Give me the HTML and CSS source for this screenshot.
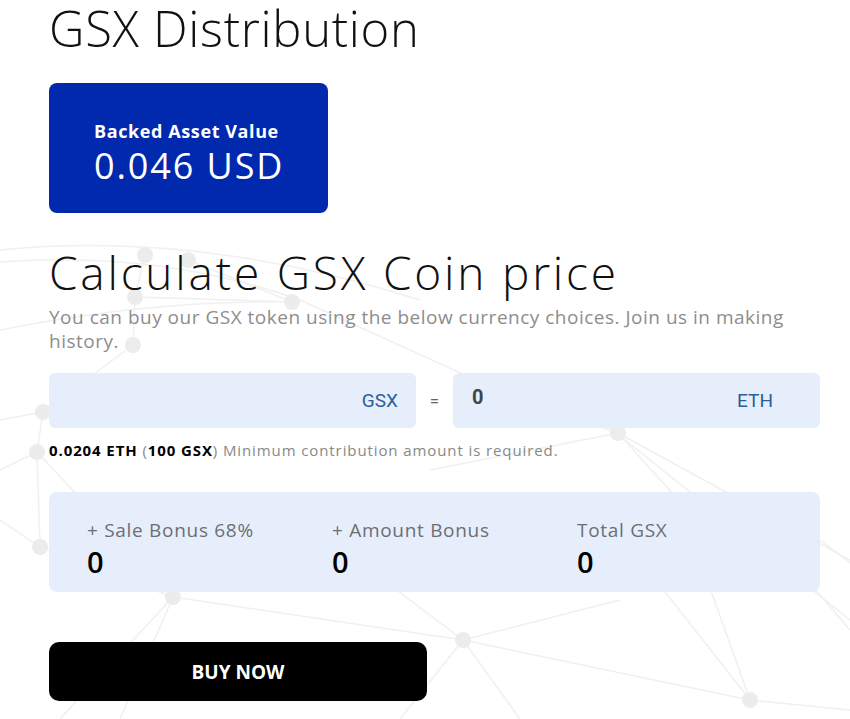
FILE: index.html
```html
<!DOCTYPE html>
<html lang="en">
<head>
<meta charset="utf-8">
<title>GSX Distribution</title>
<link rel="stylesheet" href="styles.css">
</head>
<body>
<svg class="bg-net" width="850" height="719" viewBox="0 0 850 719" aria-hidden="true">
  <g class="net-lines">
    <path d="M0 250 Q 200 230 420 300"/>
    <path d="M0 262 Q 160 250 300 300"/>
    <path d="M0 330 Q 150 300 290 302"/>
    <path d="M145 255 L135 297 L133 345"/>
    <path d="M188 260 L292 302"/>
    <path d="M135 297 L292 302"/>
    <path d="M0 420 L43 412 L133 345"/>
    <path d="M43 412 L37 452 L40 547"/>
    <path d="M0 470 L37 452 L173 597"/>
    <path d="M40 547 L173 597"/>
    <path d="M0 520 L40 547"/>
    <path d="M173 597 L463 640 L750 700"/>
    <path d="M173 597 L60 719"/>
    <path d="M120 719 L173 597"/>
    <path d="M463 640 L400 719"/>
    <path d="M463 640 L520 719"/>
    <path d="M463 640 L330 540"/>
    <path d="M618 433 L850 560"/>
    <path d="M600 420 L850 620"/>
    <path d="M520 400 L618 433"/>
    <path d="M618 433 L760 590"/>
    <path d="M750 700 L700 560"/>
    <path d="M750 700 L850 710"/>
    <path d="M750 700 L640 560"/>
    <path d="M790 560 L850 630"/>
    <path d="M430 470 L618 433"/>
    <path d="M300 300 L520 400"/>
    <path d="M620 600 L463 640"/>
    <path d="M900 600 L820 540"/>
  </g>
  <g class="net-nodes">
    <circle cx="145" cy="255" r="8"/>
    <circle cx="188" cy="260" r="8"/>
    <circle cx="135" cy="297" r="8"/>
    <circle cx="292" cy="302" r="8"/>
    <circle cx="133" cy="345" r="8"/>
    <circle cx="43" cy="412" r="8"/>
    <circle cx="37" cy="452" r="8"/>
    <circle cx="618" cy="433" r="8"/>
    <circle cx="40" cy="547" r="8"/>
    <circle cx="173" cy="597" r="8"/>
    <circle cx="463" cy="640" r="8"/>
    <circle cx="750" cy="700" r="8"/>
  </g>
</svg>

<main class="page">
  <h1 class="title">GSX Distribution</h1>

  <section class="value-card">
    <div class="value-label">Backed Asset Value</div>
    <div class="value-amount">0.046 USD</div>
  </section>

  <h2 class="calc-title">Calculate GSX Coin price</h2>
  <p class="calc-desc">You can buy our GSX token using the below currency choices. Join us in making history.</p>

  <div class="converter">
    <div class="field">
      <span class="field-value"></span>
      <span class="field-unit">GSX</span>
    </div>
    <div class="equals">=</div>
    <div class="field">
      <span class="field-value">0</span>
      <span class="field-unit">ETH</span>
    </div>
  </div>

  <div class="min-note"><b>0.0204 ETH</b> (<b>100 GSX</b>) Minimum contribution amount is required.</div>

  <div class="bonus-box">
    <div class="bonus-item">
      <div class="bonus-label">+ Sale Bonus 68%</div>
      <div class="bonus-value">0</div>
    </div>
    <div class="bonus-item">
      <div class="bonus-label">+ Amount Bonus</div>
      <div class="bonus-value">0</div>
    </div>
    <div class="bonus-item">
      <div class="bonus-label">Total GSX</div>
      <div class="bonus-value">0</div>
    </div>
  </div>

  <button class="buy-btn" type="button">BUY NOW</button>
</main>
</body>
</html>
```

FILE: styles.css
```css
html, body {
  margin: 0;
  padding: 0;
  background: #ffffff;
}

body {
  font-family: "Open Sans", "Lato", sans-serif;
  color: #000;
  position: relative;
  width: 850px;
  height: 719px;
  overflow: hidden;
}

.bg-net {
  position: absolute;
  left: 0;
  top: 0;
  z-index: 0;
}

.net-lines path {
  fill: none;
  stroke: #f0f0f0;
  stroke-width: 1.5;
}

.net-nodes circle {
  fill: #ececec;
}

.page {
  position: relative;
  z-index: 1;
  padding: 0 0 0 49px;
  display: flex;
  flex-direction: column;
  align-items: flex-start;
}

.title {
  margin: 0;
  font-size: 49px;
  font-weight: 300;
  line-height: 56px;
  letter-spacing: 0.7px;
  color: #111;
}

.value-card {
  margin-top: 27px;
  width: 279px;
  height: 130px;
  box-sizing: border-box;
  background: #0029ae;
  border-radius: 8px;
  padding: 38px 0 0 45px;
  color: #fff;
}

.value-label {
  font-size: 18px;
  font-weight: 700;
  line-height: 20px;
  letter-spacing: 0.6px;
}

.value-amount {
  font-size: 36px;
  font-weight: 400;
  line-height: 40px;
  letter-spacing: 1.9px;
  margin-top: 5px;
}

.calc-title {
  margin: 33px 0 0 0;
  font-size: 46px;
  font-weight: 300;
  line-height: 52px;
  letter-spacing: 2.8px;
  color: #111;
}

.calc-desc {
  margin: 7px 0 0 0;
  width: 780px;
  font-size: 19px;
  line-height: 24px;
  letter-spacing: 0.5px;
  color: #8d8d8d;
}

.converter {
  margin-top: 20px;
  display: flex;
  align-items: center;
}

.field {
  width: 367px;
  height: 55px;
  box-sizing: border-box;
  background: #e6eefb;
  border-radius: 6px;
  display: flex;
  align-items: center;
  justify-content: space-between;
  padding: 0 18px 0 19px;
  font-family: "Roboto", "Liberation Sans", sans-serif;
}

.field-value {
  font-size: 20px;
  font-weight: 700;
  color: #444;
  align-self: flex-start;
  margin-top: 12px;
}

.field-unit {
  font-size: 19px;
  color: #2a5f9c;
  margin-right: 29px;
}

.field:first-child .field-unit {
  margin-right: 0;
}

.equals {
  width: 37px;
  text-align: center;
  font-family: "Roboto", "Liberation Sans", sans-serif;
  font-size: 17px;
  color: #666;
}

.min-note {
  margin-top: 13px;
  font-size: 15px;
  line-height: 18px;
  letter-spacing: 0.9px;
  color: #888;
}

.min-note b {
  color: #000;
  font-weight: 700;
}

.bonus-box {
  margin-top: 33px;
  width: 771px;
  height: 100px;
  box-sizing: border-box;
  background: #e6eefb;
  border-radius: 8px;
  padding: 26px 0 0 38px;
  display: grid;
  grid-template-columns: 245px 245px 245px;
  align-content: start;
}

.bonus-label {
  font-size: 19px;
  line-height: 24px;
  letter-spacing: 0.7px;
  color: #6b6e74;
}

.bonus-value {
  font-size: 29px;
  font-weight: 600;
  line-height: 34px;
  color: #000;
  margin-top: 3px;
}

.buy-btn {
  margin-top: 50px;
  width: 378px;
  height: 59px;
  border: none;
  border-radius: 10px;
  background: #000;
  color: #fff;
  font-family: "Open Sans", "Liberation Sans", sans-serif;
  font-weight: 700;
  font-size: 19px;
  cursor: pointer;
  padding: 0;
}
```
